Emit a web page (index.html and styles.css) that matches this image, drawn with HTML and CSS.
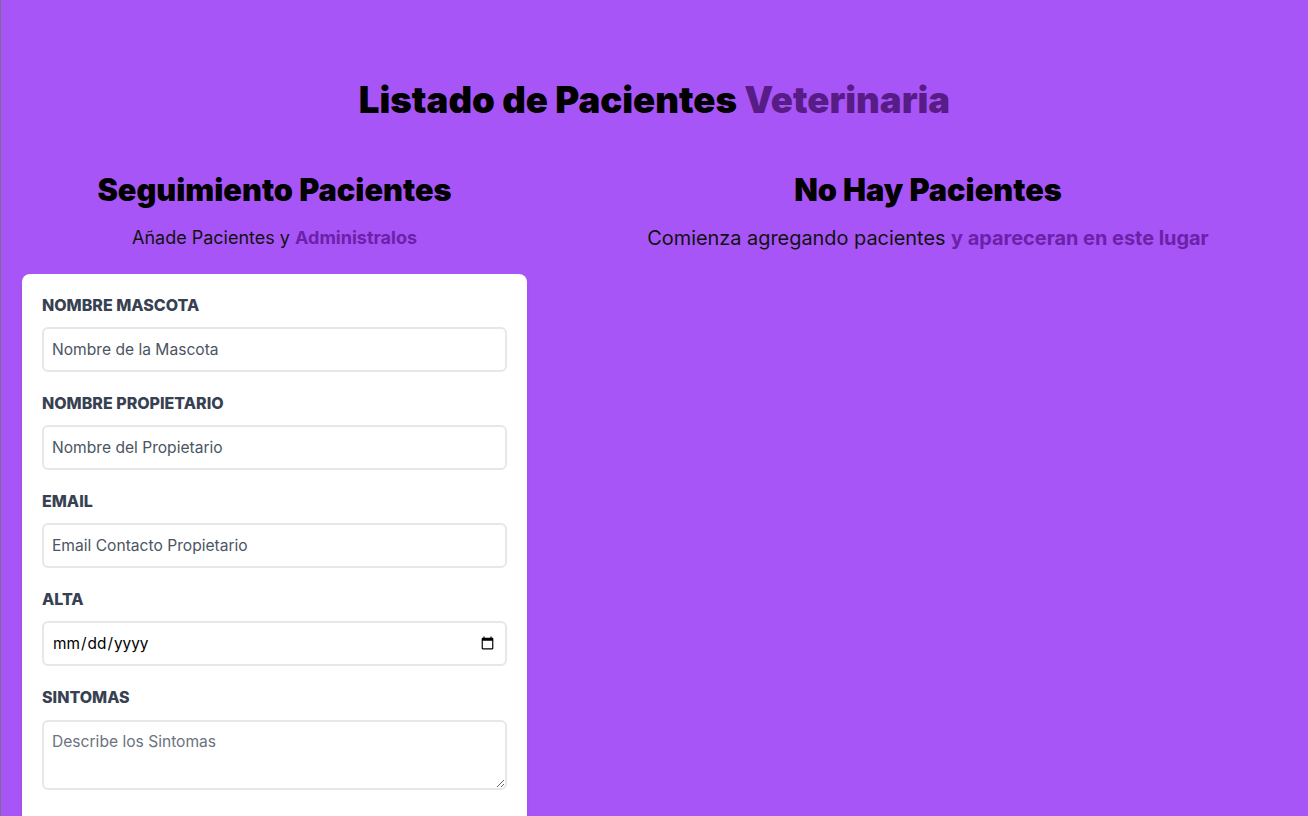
FILE: index.html
```html
<!DOCTYPE html>
<html lang="es">
<head>
<meta charset="utf-8">
<title>Listado de Pacientes Veterinaria</title>
<link rel="stylesheet" href="styles.css">
</head>
<body>
<div class="page">
  <h1 class="title">Listado de Pacientes <span class="title-accent">Veterinaria</span></h1>
  <div class="columns">
    <section class="form-col">
      <h2 class="col-title">Seguimiento Pacientes</h2>
      <p class="col-sub">Añade Pacientes y <span class="accent">Administralos</span></p>
      <form class="card">
        <div class="field">
          <label class="label" for="mascota">Nombre Mascota</label>
          <input class="input" id="mascota" type="text" placeholder="Nombre de la Mascota">
        </div>
        <div class="field">
          <label class="label" for="propietario">Nombre Propietario</label>
          <input class="input" id="propietario" type="text" placeholder="Nombre del Propietario">
        </div>
        <div class="field">
          <label class="label" for="email">Email</label>
          <input class="input" id="email" type="email" placeholder="Email Contacto Propietario">
        </div>
        <div class="field">
          <label class="label" for="alta">Alta</label>
          <input class="input input-date" id="alta" type="date">
        </div>
        <div class="field field-last">
          <label class="label" for="sintomas">Sintomas</label>
          <textarea class="input textarea" id="sintomas" placeholder="Describe los Sintomas"></textarea>
        </div>
        <input class="submit" type="submit" value="Agregar Paciente">
      </form>
    </section>
    <section class="list-col">
      <h2 class="col-title">No Hay Pacientes</h2>
      <p class="col-sub list-sub">Comienza agregando pacientes <span class="accent">y apareceran en este lugar</span></p>
    </section>
  </div>
</div>
</body>
</html>
```
FILE: styles.css
```css
html, body {
  margin: 0;
  padding: 0;
  height: 100%;
  overflow: hidden;
}
body {
  background: #a855f7;
  font-family: Inter, "Noto Sans", sans-serif;
  color: #000;
}
.page {
  min-height: 100%;
  border-left: 1px solid #7d6a8f;
  padding-top: 80px;
  box-sizing: border-box;
}
.title {
  margin: 0;
  font-weight: 900;
  font-size: 36.6px;
  line-height: 40px;
  text-align: center;
}
.title-accent {
  color: #581c87;
}
.columns {
  display: flex;
  margin-top: 48px;
}
.form-col {
  width: 505px;
  margin: 0 21px 0 21px;
  flex: none;
}
.list-col {
  flex: 1;
}
.col-title {
  margin: 0;
  font-weight: 900;
  font-size: 30.7px;
  line-height: 44px;
  text-align: center;
}
.col-sub {
  margin: 12px 0 22px;
  font-size: 18px;
  line-height: 28px;
  text-align: center;
  color: #111;
}
.list-sub {
  font-size: 19.9px;
}
.accent {
  color: #6b21a8;
  font-weight: 700;
}
.card {
  background: #fff;
  border-radius: 8px;
  padding: 20px 20px 40px;
  box-shadow: 0 4px 6px -1px rgba(0,0,0,0.1);
}
.field {
  margin-bottom: 20px;
}
.field-last {
  margin-bottom: 40px;
}
.label {
  display: block;
  color: #374151;
  text-transform: uppercase;
  font-weight: 800;
  font-size: 16px;
  line-height: 22px;
}
.input {
  display: block;
  box-sizing: border-box;
  width: 100%;
  height: 45px;
  margin-top: 11px;
  padding: 8px;
  border: 2px solid #e5e7eb;
  border-radius: 6px;
  font-family: Inter, "Noto Sans", sans-serif;
  font-size: 15.6px;
  color: #111;
  background: #fff;
  outline: none;
}
.input::placeholder {
  color: #4b5563;
}
.input-date {
  font-size: 15.4px;
  color: #000;
}
.textarea {
  height: 70px;
  margin-top: 12px;
  resize: vertical;
  line-height: 24px;
}
.textarea::placeholder {
  color: #6b7280;
}
.submit {
  width: 100%;
  padding: 12px;
  border: 0;
  border-radius: 6px;
  background: #6b21a8;
  color: #fff;
  font-weight: 700;
  text-transform: uppercase;
  font-family: Inter, "Noto Sans", sans-serif;
}
```
